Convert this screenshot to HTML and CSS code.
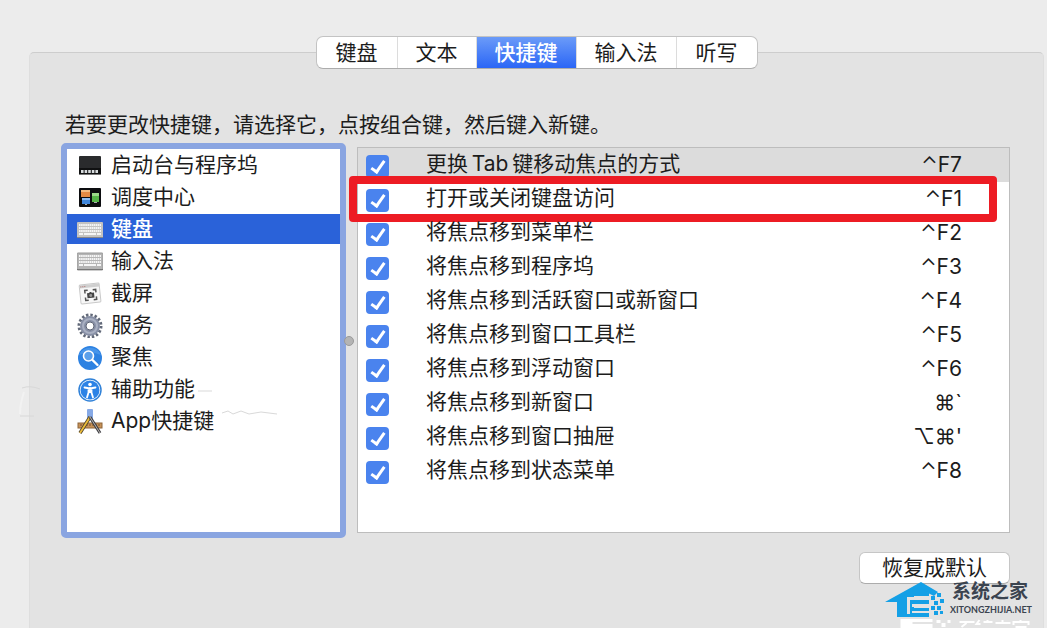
FILE: index.html
```html
<!DOCTYPE html>
<html lang="zh-CN">
  <head>
    <meta charset="UTF-8" />
    <meta name="viewport" content="width=device-width, initial-scale=1.0" />
    <title>键盘 - 快捷键</title>
    <link rel="stylesheet" href="styles.css">
  </head>
  <body>
    <nav class="tabs">
      <button>键盘</button>
      <button>文本</button>
      <button class="active">快捷键</button>
      <button>输入法</button>
      <button>听写</button>
    </nav>

    <main class="panel">
      <p class="intro">若要更改快捷键，请选择它，点按组合键，然后键入新键。</p>

      <div class="split">
        <ul class="categories">
          <li>
            <button>
              <svg viewBox="0 0 26 26">
                <rect x="2" y="4" width="22" height="19" rx="1" fill="#2a2b2d" />
                <path d="M2 16h22v6H2z" fill="#101112" />
                <path d="M4 19.5h18" stroke="#d8dcde" stroke-width="3" stroke-dasharray="2.6 1" />
                <path d="M2 22.5h22" stroke="#777" />
              </svg>
              启动台与程序坞
            </button>
          </li>
          <li>
            <button>
              <svg viewBox="0 0 26 26">
                <rect x="2" y="4" width="22" height="19" rx="1" fill="#0c0d10" />
                <rect x="4" y="6" width="9" height="7" fill="#e58b43" />
                <path d="M4 6h9v2H4z" fill="#f3bd83" />
                <rect x="5" y="14" width="8" height="6" fill="#3f86dc" />
                <path d="M5 14h8v2H5z" fill="#8fbdf0" />
                <rect x="15" y="9" width="7" height="9" fill="#55b548" />
                <path d="M15 9h7v3h-7z" fill="#9bd989" />
                <path d="M8 20h2v1H8zM17 18h3v1h-3z" fill="#aaa" />
              </svg>
              调度中心
            </button>
          </li>
          <li>
            <button class="selected">
              <svg viewBox="0 0 26 26">
                <rect x="0" y="6" width="26" height="16" rx="1" fill="#c4c3c1" />
                <path d="M2 9h22M2 12h22M2 15h22" stroke="#f5f5f5" stroke-width="2" stroke-dasharray="1.6 .5" />
                <path d="M2 18h4m1 0h12m1 0h4" stroke="#f5f5f5" stroke-width="2" />
                <path d="M0 21.5h26" stroke="#87868a" />
              </svg>
              键盘
            </button>
          </li>
          <li>
            <button>
              <svg viewBox="0 0 26 26">
                <rect x="0" y="5" width="26" height="17" rx="1" fill="#b5b5b5" stroke="#999" />
                <path d="M2 8h22M2 11h22M2 14h22" stroke="#f5f5f5" stroke-width="2" stroke-dasharray="1.6 .5" />
                <path d="M2 17h4m1 0h12m1 0h4" stroke="#f5f5f5" stroke-width="2" />
                <path d="M0 21.5h26" stroke="#777" />
              </svg>
              输入法
            </button>
          </li>
          <li>
            <button>
              <svg viewBox="0 0 26 26">
                <g transform="rotate(-6 13 13)">
                  <rect x="3" y="4" width="20" height="19" rx="1" fill="#f7f7f7" stroke="#c9c9c9" />
                  <path d="M3 6h20" stroke="#cfcfcf" stroke-width="3" />
                  <path d="M4 6h1m1 0h1m1 0h1" stroke="#b57775" />
                  <path d="M8 13v-3h3M16 10h3v3M19 17v3h-3M11 20H8v-3" fill="none" stroke="#555" stroke-width="1.5" />
                  <path d="M10 13h2l1-1h1l1 1h2v5h-7z" fill="#444" />
                  <circle cx="13.5" cy="15.5" r="1.5" fill="#999" />
                </g>
              </svg>
              截屏
            </button>
          </li>
          <li>
            <button>
              <svg viewBox="0 0 26 26">
                <circle cx="13" cy="14" r="11" fill="none" stroke="#626979" stroke-width="3" stroke-dasharray="2.4 1.92" />
                <circle cx="13" cy="14" r="7" fill="none" stroke="#878fa5" stroke-width="6" />
                <circle cx="13" cy="14" r="7" fill="none" stroke="#a9b0c2" stroke-width="2" />
                <circle cx="13" cy="14" r="4" fill="#fff" stroke="#5d6475" />
              </svg>
              服务
            </button>
          </li>
          <li>
            <button>
              <svg viewBox="0 0 26 26">
                <circle cx="13" cy="14" r="12" fill="#2d82e2" />
                <path d="M2 11a12 12 0 0 1 22 0q-11-5-22 0" fill="#4795ea" />
                <circle cx="11.5" cy="12" r="5" fill="#5ba0eb" stroke="#fff" stroke-width="1.6" />
                <path d="m15.500 16 5 5" stroke="#fff" stroke-width="2.4" stroke-linecap="round" />
              </svg>
              聚焦
            </button>
          </li>
          <li>
            <button>
              <svg viewBox="0 0 26 26">
                <circle cx="13" cy="14" r="11" fill="#fff" stroke="#3182d8" stroke-width="1.5" />
                <circle cx="13" cy="14" r="9.5" fill="#2c83e6" />
                <circle cx="13" cy="8.5" r="1.800" fill="#fff" />
                <path d="M7.500 11.500 13 12.500l5.500-1M13 12v4M11.500 12.500v4l-1.500 5M14.500 12.500v4l1.500 5" fill="none" stroke="#fff" stroke-width="1.8" stroke-linecap="round" />
              </svg>
              辅助功能
            </button>
          </li>
          <li>
            <button>
              <svg viewBox="0 0 26 26">
                <rect x="10" y="1" width="6" height="10" rx="1" fill="#86a9e6" />
                <rect x="1" y="15" width="24" height="5" fill="#c79258" stroke="#8d6438" />
                <path d="M4 16v2m3-2v2m3-2v2m3-2v2m3-2v2m3-2v2m3-2v2" stroke="#75502b" />
                <path d="M13 9 3 25" stroke="#4f432e" stroke-width="3.4" />
                <path d="M13 9 3 25" stroke="#edbd39" stroke-width="1.8" />
                <path d="m13 9 10 16" stroke="#3d3d42" stroke-width="3" />
                <path d="m13 9 10 16" stroke="#b9b6b3" stroke-width="1" />
              </svg>
              App快捷键
            </button>
          </li>
        </ul>

        <div class="divider"><span></span></div>

        <div class="shortcuts">
          <table>
            <tbody>
              <tr class="current">
                <td><input type="checkbox" id="s1" checked></td>
                <td><label for="s1">更换&thinsp;Tab&thinsp;键移动焦点的方式</label></td>
                <td>⌃F7</td>
              </tr>
              <tr class="marked">
                <td><input type="checkbox" id="s2" checked></td>
                <td><label for="s2">打开或关闭键盘访问</label></td>
                <td>⌃F1</td>
              </tr>
              <tr>
                <td><input type="checkbox" id="s3" checked></td>
                <td><label for="s3">将焦点移到菜单栏</label></td>
                <td>⌃F2</td>
              </tr>
              <tr>
                <td><input type="checkbox" id="s4" checked></td>
                <td><label for="s4">将焦点移到程序坞</label></td>
                <td>⌃F3</td>
              </tr>
              <tr>
                <td><input type="checkbox" id="s5" checked></td>
                <td><label for="s5">将焦点移到活跃窗口或新窗口</label></td>
                <td>⌃F4</td>
              </tr>
              <tr>
                <td><input type="checkbox" id="s6" checked></td>
                <td><label for="s6">将焦点移到窗口工具栏</label></td>
                <td>⌃F5</td>
              </tr>
              <tr>
                <td><input type="checkbox" id="s7" checked></td>
                <td><label for="s7">将焦点移到浮动窗口</label></td>
                <td>⌃F6</td>
              </tr>
              <tr>
                <td><input type="checkbox" id="s8" checked></td>
                <td><label for="s8">将焦点移到新窗口</label></td>
                <td>⌘`</td>
              </tr>
              <tr>
                <td><input type="checkbox" id="s9" checked></td>
                <td><label for="s9">将焦点移到窗口抽屉</label></td>
                <td>⌥⌘'</td>
              </tr>
              <tr>
                <td><input type="checkbox" id="s10" checked></td>
                <td><label for="s10">将焦点移到状态菜单</label></td>
                <td>⌃F8</td>
              </tr>
            </tbody>
          </table>
        </div>
      </div>

      <button class="restore">恢复成默认</button>
    </main>

    <div class="watermark">
      <svg viewBox="0 0 60 36">
        <path d="M0 20 36 0l17 10-4 4-14-7L14 20z" fill="#14a0e6" />
        <path d="M12 20V17L35 5l9 6v3H29v4h15v4H29v4h15v9H12z" fill="#14a0e6" />
        <path d="M22 15h22v3H25v14h-3zM27 22h17v3H27zM27 29h17v2H27z" fill="#e3e3e3" />
        <path d="M46 14h4v4h-4zM52 11h4v4h-4zM49 19h4v4h-4zM55 17h4v4h-4zM46 24h4v4h-4zM52 24h4v4h-4zM49 29h4v4h-4zM55 29h3v3h-3z" fill="#14a0e6" />
      </svg>
      <div class="site">
        <strong>系统之家</strong>
        <span>XITONGZHIJIA.NET</span>
      </div>
    </div>
    <svg class="reflection" viewBox="0 0 136 9">
      <path d="M9 0h32v3H21v2h20v4H9zM45 1h4v3h-4zM50 4h4v4h-4zM56 1h3v3h-3z" fill="#fff" />
      <path d="M68 3h15M75 4l-5 4M88 1l-3 4h4M92 3h9M96 1v2M104 4h15M111 1v3M122 6V3h15v3M129 1v2M124 8h11" fill="none" stroke="#fff" stroke-width="2" />
    </svg>
    <svg class="smudge" viewBox="0 0 280 50">
      <path d="M22 5q8-3 18 1M20 33h14" fill="none" stroke="#d8d8d8" />
      <path d="M24 9q-4 12-4 22" fill="none" stroke="#f2f2f2" stroke-width="2" />
      <path d="M198 8h14M222 30l6-2 5 3 8-3 8 3 12-2 16 2" fill="none" stroke="#d9d9d9" />
    </svg>
  </body>
</html>
```

FILE: styles.css
```css
* {
  margin: 0;
  padding: 0;
  box-sizing: border-box;
}
body {
  min-height: 100vh;
  padding: 36px 3px 0 29px;
  position: relative;
  overflow: hidden;
  display: flex;
  flex-direction: column;
  background-color: #ececec;
  color: #1c1c1c;
  font-family: Inter, "Noto Sans CJK SC", sans-serif;
  font-size: 21px;
  line-height: 30px;
}
button {
  border: none;
  background: none;
  color: inherit;
  font: inherit;
}
.tabs {
  display: flex;
  align-self: center;
  position: relative;
  margin-bottom: -17px;
  border: 1px solid #c3c3c3;
  border-bottom-color: #acacac;
  border-radius: 7px;
  background: #fff;
}
.tabs button {
  height: 31px;
  padding: 0 18px;
  border-right: 1px solid #dcdcdc;
}
.tabs button:first-child,
.tabs button:last-child {
  padding: 0 19px;
}
.tabs button:last-child {
  border-right: none;
}
.tabs .active {
  background: linear-gradient(#6b9bf8, #2b66f6);
  color: #fff;
  font-weight: 500;
}
.panel {
  flex: 1;
  padding: 57px 33px 0 31px;
  border: 1px solid #dedede;
  border-top-color: #cdcdcd;
  border-bottom: none;
  border-radius: 5px 5px 0 0;
  background: #e3e3e3;
  display: flex;
  flex-direction: column;
}
.intro {
  padding-left: 4px;
  margin-bottom: 3px;
}
.split {
  display: grid;
  grid-template-columns: 285fr 11px 653fr;
}
.categories {
  min-height: 395px;
  padding: 1px 0;
  border: 6px solid #8aa5e1;
  border-radius: 5px;
  background: #fff;
  list-style: none;
  display: flex;
  flex-direction: column;
  gap: 2px;
}
.categories button {
  width: 100%;
  height: 30px;
  padding-left: 10px;
  display: flex;
  align-items: center;
  gap: 8px;
  line-height: 28px;
  text-align: left;
}
.categories svg {
  width: 26px;
  height: 26px;
}
.categories .selected {
  background: #2a62d9;
  color: #fff;
  font-weight: 500;
}
.divider {
  display: flex;
  align-items: center;
}
.divider span {
  flex: none;
  width: 10px;
  height: 10px;
  margin-left: -2px;
  border: 1px solid #9a9a9a;
  border-radius: 50%;
  background: #b4b4b4;
}
.shortcuts {
  margin: 4px 0 5px;
  border: 1px solid #bdbdbd;
  background: #fff;
}
table {
  width: 100%;
  border-collapse: collapse;
}
tr {
  position: relative;
}
td {
  height: 34px;
  line-height: 32px;
  vertical-align: top;
}
td:first-child {
  width: 68px;
  padding: 7px 0 0 8px;
  line-height: 0;
}
td:last-child {
  padding-right: 47px;
  padding-top: 1px;
  text-align: right;
}
.current {
  background: #dcdcdc;
}
.marked::after {
  content: "";
  position: absolute;
  top: -6px;
  right: 12px;
  bottom: -6px;
  left: -9px;
  border: 8px solid #ed1c24;
  border-radius: 4px;
  pointer-events: none;
}
input[type="checkbox"] {
  appearance: none;
  width: 23px;
  height: 23px;
  border-radius: 4px;
  background: #4a83ee;
}
input[type="checkbox"]:checked::before {
  content: "";
  display: block;
  box-sizing: border-box;
  width: 8px;
  height: 15px;
  margin: 3px 0 0 8px;
  border: solid #fff;
  border-width: 0 3px 3px 0;
  transform: rotate(35deg);
}
.restore {
  align-self: flex-end;
  height: 32px;
  margin-top: 14px;
  padding: 0 22px;
  border: 1px solid #c6c6c6;
  border-bottom-color: #acacac;
  border-radius: 6px;
  background: #fff;
}
.watermark {
  position: absolute;
  right: 15px;
  bottom: 10px;
  display: flex;
  align-items: center;
  gap: 5px;
}
.watermark svg {
  width: 60px;
  height: 36px;
}
.site {
  display: flex;
  flex-direction: column;
  color: #3b4450;
}
.site strong {
  padding-left: 2px;
  font-size: 19px;
  line-height: 20px;
}
.site span {
  font-family: Lato, sans-serif;
  font-size: 9px;
  line-height: 16px;
  font-weight: 700;
}
.reflection {
  position: absolute;
  right: 15px;
  bottom: 0;
  width: 145px;
  height: 9px;
}
.smudge {
  position: absolute;
  top: 383px;
  left: 0;
  width: 280px;
  height: 50px;
  pointer-events: none;
}
```
